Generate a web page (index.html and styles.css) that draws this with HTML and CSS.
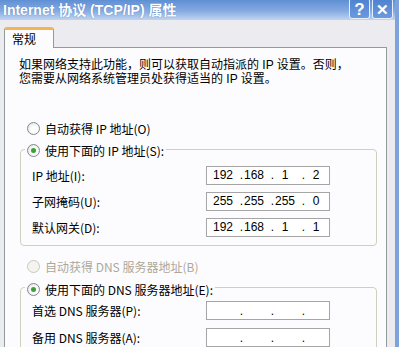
FILE: index.html
```html
<!DOCTYPE html>
<html lang="zh-CN">
<head>
    <meta charset="UTF-8">
    <title>Internet 协议 (TCP/IP) 属性</title>
    <link rel="stylesheet" href="styles.css">
</head>
<body>
    <div class="window">
        <div class="titlebar">
            <span class="title">Internet 协议 (TCP/IP) 属性</span>
            <div class="tbtns">
                <span class="tbtn">?</span>
                <span class="tbtn close">✕</span>
            </div>
        </div>

        <div class="client">
            <div class="tabs">
                <div class="tab">常规</div>
            </div>

            <div class="panel">
                <p class="intro">如果网络支持此功能，则可以获取自动指派的 IP 设置。否则，<br>您需要从网络系统管理员处获得适当的 IP 设置。</p>

                <div class="radio first"><span class="dot"></span>自动获得 IP 地址(O)</div>

                <fieldset class="group">
                    <legend><span class="radio"><span class="dot on"></span>使用下面的 IP 地址(S):</span></legend>
                    <div class="fields">
                        <div class="row">
                            <span class="label">IP 地址(I):</span>
                            <div class="ip"><span class="n">192</span><span class="d">.</span><span class="n">168</span><span class="d">.</span><span class="n">1</span><span class="d">.</span><span class="n">2</span></div>
                        </div>
                        <div class="row">
                            <span class="label">子网掩码(U):</span>
                            <div class="ip"><span class="n">255</span><span class="d">.</span><span class="n">255</span><span class="d">.</span><span class="n">255</span><span class="d">.</span><span class="n">0</span></div>
                        </div>
                        <div class="row">
                            <span class="label">默认网关(D):</span>
                            <div class="ip"><span class="n">192</span><span class="d">.</span><span class="n">168</span><span class="d">.</span><span class="n">1</span><span class="d">.</span><span class="n">1</span></div>
                        </div>
                    </div>
                </fieldset>

                <div class="radio disabled"><span class="dot"></span>自动获得 DNS 服务器地址(B)</div>

                <fieldset class="group dns">
                    <legend><span class="radio"><span class="dot on"></span>使用下面的 DNS 服务器地址(E):</span></legend>
                    <div class="fields">
                        <div class="row">
                            <span class="label">首选 DNS 服务器(P):</span>
                            <div class="ip"><span class="n"></span><span class="d">.</span><span class="n"></span><span class="d">.</span><span class="n"></span><span class="d">.</span><span class="n"></span></div>
                        </div>
                        <div class="row">
                            <span class="label">备用 DNS 服务器(A):</span>
                            <div class="ip"><span class="n"></span><span class="d">.</span><span class="n"></span><span class="d">.</span><span class="n"></span><span class="d">.</span><span class="n"></span></div>
                        </div>
                    </div>
                </fieldset>
            </div>
        </div>
    </div>
</body>
</html>
```

FILE: styles.css
```css
html, body {
    margin: 0;
    height: 100%;
    overflow: hidden;
}

body {
    font-family: "Noto Sans CJK SC", sans-serif;
    font-size: 12px;
    color: #000;
}

.window {
    width: 399px;
    height: 347px;
    box-sizing: border-box;
    border-right: 4px solid #7ea2dc;
    background: #ecebf0;
}

.titlebar {
    height: 20px;
    display: flex;
    align-items: flex-start;
    justify-content: space-between;
    background: linear-gradient(#5f8fd4, #86abe2 55%, #c0d4f0);
}

.title {
    padding-left: 3px;
    line-height: 21px;
    font-family: "Liberation Sans", "Noto Sans CJK SC", sans-serif;
    font-size: 14px;
    font-weight: bold;
    color: #fff;
    text-shadow: 0 0 1px #4a72b0;
}

.tbtns {
    display: flex;
    gap: 2px;
    margin-top: -2px;
    padding-right: 2px;
}

.tbtn {
    width: 19px;
    height: 19px;
    border: 1px solid #e8f0fb;
    border-radius: 3px;
    background: linear-gradient(#4d82cf, #6b9ae0);
    color: #fff;
    font-family: "Liberation Sans", sans-serif;
    font-size: 17px;
    font-weight: bold;
    line-height: 21px;
    text-align: center;
}

.tbtn.close {
    font-size: 15px;
}

.client {
    padding: 7px 8px 0 4px;
}

.tabs {
    display: flex;
}

.tab {
    position: relative;
    width: 50px;
    height: 21px;
    margin-bottom: -1px;
    padding-left: 7px;
    box-sizing: border-box;
    border: 1px solid #919b9c;
    border-top: 3px solid #f3b552;
    border-bottom: none;
    border-radius: 3px 3px 0 0;
    background: #fcfcfe;
    line-height: 17px;
    font-size: 12px;
}

.panel {
    height: 300px;
    border: 1px solid #919b9c;
    background: #fcfcfe;
    padding-top: 10px;
}

.intro {
    margin: 0 0 0 14px;
    font-family: "Liberation Sans", "Noto Sans CJK SC", sans-serif;
    line-height: 14px;
    white-space: nowrap;
}

.radio {
    display: inline-flex;
    align-items: center;
    gap: 5px;
    height: 18px;
    white-space: nowrap;
}

.radio.first,
.radio.disabled {
    display: flex;
    margin-left: 22px;
}

.radio.first {
    margin-top: 33px;
}

.radio.disabled {
    margin-top: 12px;
    color: #aca899;
}

.dot {
    width: 11px;
    height: 11px;
    border: 1px solid #7f8a8e;
    border-radius: 50%;
    background: radial-gradient(circle at 60% 60%, #fff 30%, #dcdcd6);
    display: flex;
    align-items: center;
    justify-content: center;
}

.radio.disabled .dot {
    border-color: #cac8bb;
    background: #f4f3ee;
}

.dot.on::after {
    content: "";
    width: 5px;
    height: 5px;
    border-radius: 50%;
    background: #3aa13a;
}

.group {
    margin: 2px 9px 0 15px;
    padding: 0;
    border: 1px solid #d0d0bf;
    border-radius: 4px;
}

.group legend {
    margin-left: 4px;
    padding: 0 2px;
    background: #fcfcfe;
}

.fields {
    padding: 6px 0 8px 11px;
    display: flex;
    flex-direction: column;
    gap: 7px;
}

.dns .fields {
    padding-top: 3px;
    gap: 8px;
}

.row {
    display: flex;
    align-items: center;
    height: 19px;
}

.label {
    width: 174px;
    white-space: nowrap;
}

.ip {
    width: 124px;
    height: 19px;
    box-sizing: border-box;
    border: 1px solid #a5a5a5;
    background: #fff;
    display: flex;
    align-items: center;
    padding-left: 5px;
    font-family: "Liberation Sans", sans-serif;
    font-size: 12px;
}

.ip .n {
    width: 22px;
    text-align: center;
}

.ip .d {
    width: 9px;
    text-align: right;
}
```
